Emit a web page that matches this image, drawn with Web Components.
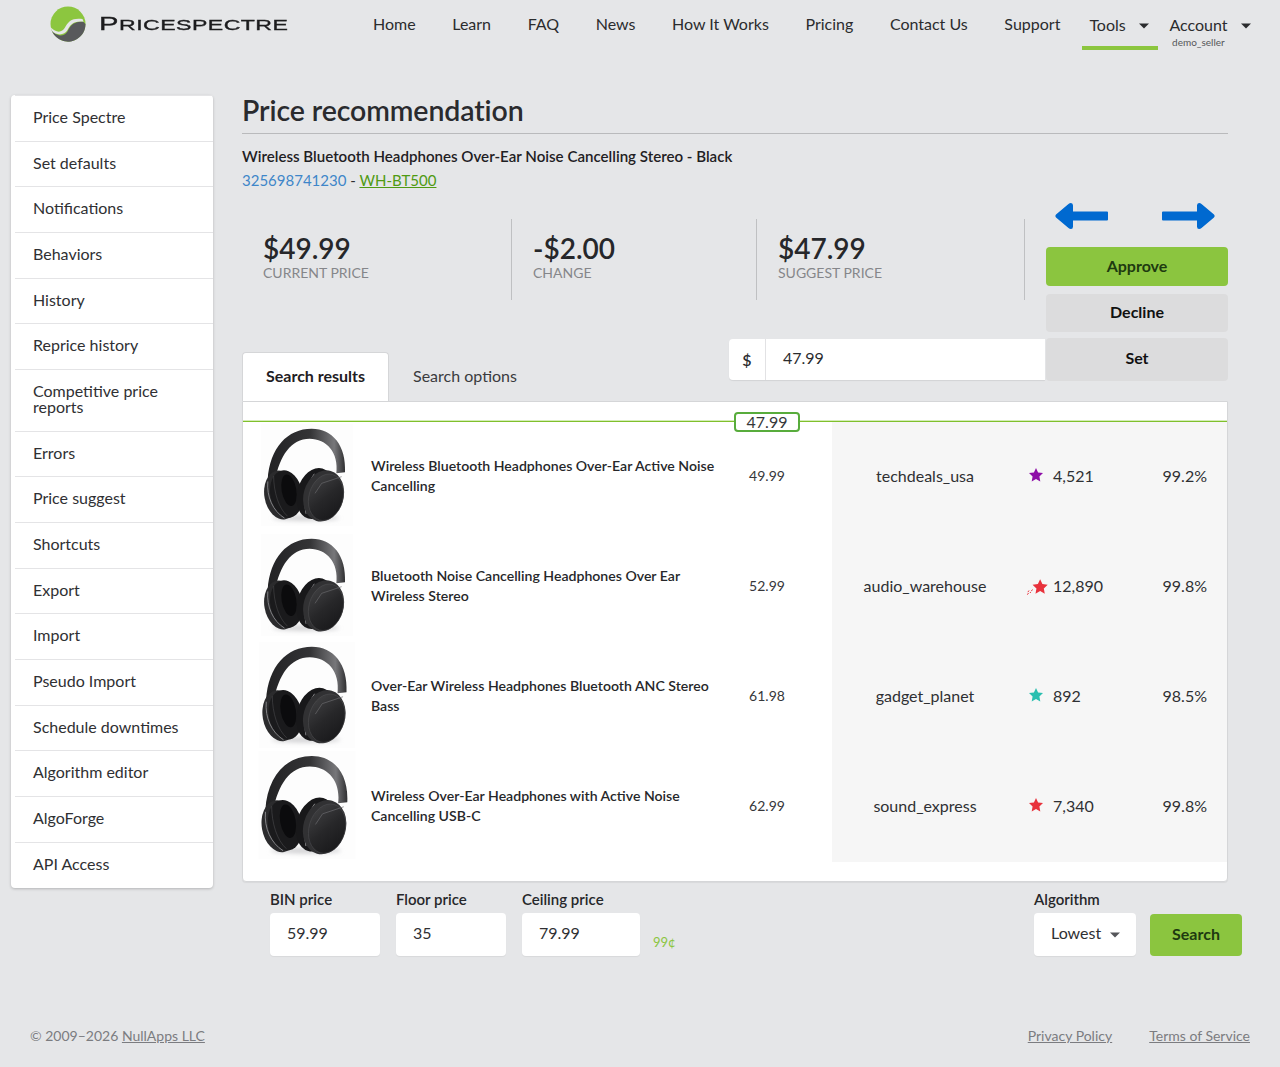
<!DOCTYPE html>
<html lang="en"><head><meta charset="utf-8"><title>Price recommendation</title>
<style>
html,body{margin:0;padding:0;background:#e5e6e8;}
body{font-family:Lato,"Liberation Sans",sans-serif;color:#2b2c2e;font-size:16px;height:1067px;overflow:hidden;}
</style></head><body>
<ps-nav></ps-nav>
<ps-layout>
  <ps-sidebar slot="side"></ps-sidebar>
  <ps-main slot="main"></ps-main>
</ps-layout>
<ps-footer></ps-footer>
<script>
function def(name,html){
  customElements.define(name,class extends HTMLElement{
    constructor(){super();const r=this.attachShadow({mode:'open'});r.innerHTML=typeof html==='function'?html(this):html;}
    connectedCallback(){ if(typeof html==='function'){this.shadowRoot.innerHTML=html(this);} }
  });
}
const caret=(c='#2b2c2e')=>`<svg width="10" height="6" viewBox="0 0 10 6"><path d="M0 .5h10L5 5.5z" fill="${c}"/></svg>`;

def('ps-logo',`<style>:host{display:flex;align-items:center;}
.t{font:400 22px "Liberation Sans",sans-serif;font-variant:small-caps;letter-spacing:.3px;color:#1c1c1e;-webkit-text-stroke:.35px #1c1c1e;transform:scaleX(1.54);transform-origin:left center;white-space:nowrap;margin-left:13px;line-height:20px;margin-top:-2px}
.t b{font-weight:400;font-size:19px}
svg{display:block}</style>
<svg width="36" height="36" viewBox="0 0 36 36">
<circle cx="18" cy="18" r="17.5" fill="#8cc63f"/>
<path d="M1.500 24C6 31 14 31 17.500 25.500C20 21 22 15.500 33 15.500L35.500 18A17.500 17.500 0 0 1 1.500 24Z" fill="#58595b"/>
<path d="M.9 21.500C6 27 12 27 15 21.500C18 15 23 11.500 32.500 13L33.600 15.700C23 14.500 20 19.500 17.500 24C14 30 6 29.500 1.600 24.500Z" fill="#e5e6e8"/>
</svg><span class="t"><b>P</b>ricespectre</span>`);

def('ps-nav',`<style>:host{display:flex;height:50px;box-sizing:border-box;padding-left:50px;align-items:flex-start;color:#2b2c2e}
ps-logo{margin-top:6px;width:323px}
nav{display:flex;gap:36.600px;font-size:16px;line-height:20px;padding-top:14px}
.menu{display:flex;margin-left:22px}
.m{position:relative;height:50px;box-sizing:border-box;padding-top:15px;line-height:20px;}
.tools{width:76px;border-bottom:4px solid #8cc63f;padding-left:7px}
.acct{width:70px;margin-left:11px}
.m svg{position:absolute;top:23px}
.tools svg{left:57px}.acct svg{left:72px}
small{display:block;font-size:10px;line-height:12px;color:#55565a;text-align:center;margin-top:1px;width:58px}
</style><ps-logo></ps-logo><nav><span>Home</span><span>Learn</span><span>FAQ</span><span>News</span><span>How It Works</span><span>Pricing</span><span>Contact Us</span><span>Support</span></nav>
<div class="menu"><div class="m tools">Tools${caret()}</div><div class="m acct">Account${caret()}<small>demo_seller</small></div></div>`);

def('ps-layout',`<style>:host{display:flex;padding:45px 0 0 11px;align-items:flex-start}
::slotted([slot=side]){width:202px;flex:none}::slotted([slot=main]){margin-left:29px;flex:none}</style><slot name="side"></slot><slot name="main"></slot>`);

const side=["Price Spectre","Set defaults","Notifications","Behaviors","History","Reprice history","Competitive price reports","Errors","Price suggest","Shortcuts","Export","Import","Pseudo Import","Schedule downtimes","Algorithm editor","AlgoForge","API Access"];
def('ps-sidebar',`<style>:host{display:block;background:#fff;border-radius:4px;box-shadow:0 1px 3px rgba(0,0,0,.22);padding:0 0 0 4px;box-sizing:border-box;height:793px}
div{box-sizing:border-box;height:45.700px;padding:13px 22px 0 18px;line-height:16px;border-top:1px solid #e4e4e6;color:#2f3033}
div:first-child{border-top:0;height:46px;padding-top:14px}
div.tall{height:61.500px;padding-top:13px;padding-right:30px}
</style>`+side.map(s=>`<div class="${s.startsWith('Competitive')?'tall':''}">${s}</div>`).join(''));

let hid=0;
const hp=(sc=1)=>{const n=hid++;return `<svg width="92" height="102" viewBox="60 250 276 306" style="transform:scale(${sc})">
<defs>
<linearGradient id="b${n}" x1="0" x2="1" y1="0" y2="0"><stop offset="0" stop-color="#222224"/><stop offset=".55" stop-color="#343436"/><stop offset=".86" stop-color="#77777a"/><stop offset="1" stop-color="#2f2f31"/></linearGradient>
<linearGradient id="c${n}" x1="0" x2="1" y1="0" y2="1"><stop offset="0" stop-color="#454547"/><stop offset=".5" stop-color="#272729"/><stop offset="1" stop-color="#151517"/></linearGradient>
<filter id="s${n}" x="-20%" y="-80%" width="140%" height="260%"><feGaussianBlur stdDeviation="6"/></filter>
</defs>
<rect x="60" y="250" width="276" height="306" fill="#fdfdfd"/>
<ellipse cx="195" cy="532" rx="100" ry="8" fill="#d2d2d4" filter="url(#s${n})"/>
<path d="M80 418C86 320 140 264 212 264C275 264 316 315 312 395L286 398C294 335 256 294 206 294C150 294 116 345 102 420Z" fill="url(#b${n})"/>
<g transform="rotate(-10 126 462)">
<ellipse cx="120" cy="462" rx="50" ry="74" fill="#2b2b2d"/>
<ellipse cx="136" cy="462" rx="48" ry="72" fill="#1a1a1c"/>
<ellipse cx="146" cy="452" rx="22" ry="48" fill="#0b0b0d"/>
<path d="M88 415C76 460 88 505 118 532" stroke="#8a8a8d" stroke-width="2.500" fill="none"/>
<path d="M108 402C100 450 106 500 128 528" stroke="#4c4c4f" stroke-width="1.500" fill="none"/>
</g>
<g transform="rotate(16 242 464)">
<ellipse cx="222" cy="464" rx="54" ry="78" fill="#18181a"/>
<path d="M203 408C190 445 192 490 212 530" stroke="#8f8f92" stroke-width="2.500" fill="none"/>
<ellipse cx="248" cy="464" rx="60" ry="78" fill="#313133"/>
<ellipse cx="256" cy="466" rx="51" ry="71" fill="url(#c${n})" stroke="#555558" stroke-width="1.200"/>
</g>
<path d="M222 458L242 428L302 408" stroke="#6a6a6d" stroke-width="2" fill="none"/>
</svg>`};

const star=(c,dash)=>`<svg width="16" height="20" viewBox="0 0 16 20" style="overflow:visible"><g ${dash?'transform="translate(3.500 1) scale(1.080)"':''}><path d="M8 3l2.100 4.500 4.900.6-3.600 3.400.9 4.900L8 13.900 3.700 16.400l.9-4.900L1 8.100l4.900-.6z" fill="${c}"/></g>${dash?`<path d="M4.500 14.500l-2.500 3.500M1 15.500l-1.500 2.200M.5 18l-1.200 1.800" stroke="${c}" stroke-width="1" stroke-dasharray="2 1"/>`:''}</svg>`;

const rows=[
["Wireless Bluetooth Headphones Over-Ear Active Noise Cancelling","49.99","techdeals_usa","#8e0ea8","4,521","99.2%",0,1],
["Bluetooth Noise Cancelling Headphones Over Ear Wireless Stereo","52.99","audio_warehouse","#e8323c","12,890","99.8%",1,1],
["Over-Ear Wireless Headphones Bluetooth ANC Stereo Bass","61.98","gadget_planet","#2abfb0","892","98.5%",0,1.04],
["Wireless Over-Ear Headphones with Active Noise Cancelling USB-C","62.99","sound_express","#e8323c","7,340","99.8%",0,1.06]];

def('ps-row',el=>{const r=rows[+el.getAttribute('i')];return `<style>:host{display:grid;grid-template-columns:128px 353px 108px 186px 1fr 90px;height:110px;align-items:center}
.i{display:flex;justify-content:center;padding-bottom:5px;}
.t{font-size:14.100px;font-weight:600;line-height:20px;color:#26272a;padding-bottom:2px}
.p{font-size:14px;text-align:center;color:#36373a;padding:0 22px 4px 0}
.g{background:#f6f6f6;height:100%;box-sizing:border-box;display:flex;align-items:center;justify-content:center;color:#2f3033;padding-bottom:4px}
.f{justify-content:flex-start;padding-left:10px;gap:9px}
.q{justify-content:flex-end;padding-right:20px}
svg{display:block}</style>
<div class="i">${hp(r[7])}</div><div class="t">${r[0]}</div><div class="p">${r[1]}</div><div class="g">${r[2]}</div><div class="g f">${star(r[3],r[6])}<span>${r[4]}</span></div><div class="g q">${r[5]}</div>`});

def('ps-main',`<style>:host{display:block;width:1000px;color:#2b2c2e}
.w{width:986px}
h1{margin:0;font-size:28.500px;line-height:30px;font-weight:600;letter-spacing:-.1px;padding-bottom:8px;border-bottom:1px solid #b9babc;height:30px;color:#2a2b2e}
.pt{font-size:15.100px;font-weight:600;line-height:20px;margin-top:12px;color:#1f2023}
.ln{font-size:15px;line-height:20px;margin-top:4px;color:#2f3033}
.ln a{color:#3f86c9}.ln a+a{color:#4f9a12;text-decoration:underline}
.top{display:flex;justify-content:space-between;height:150px}
.stats{display:flex;margin-top:29px;height:81px}
.st{box-sizing:border-box;border-right:1px solid #bfc0c2;padding:13px 0 0 21px}
.st b{display:block;font-size:28px;line-height:32px;font-weight:600;color:#26272a}
.st span{display:block;font-size:14px;line-height:18px;color:#85868a;text-transform:uppercase;margin-top:0}
.act{width:182px;display:flex;flex-direction:column;margin-top:2px}
.ar{display:flex;justify-content:space-between;padding:10px 12px 0 8px;height:28px;margin-bottom:17px}
.btn{box-sizing:border-box;border-radius:4px;display:flex;align-items:center;justify-content:center;font-weight:700;color:#111;background:#dcdcdd;font-size:16px;padding-bottom:3px}
.gr{background:#8bc53f;color:#1e3a10;font-weight:700}
.tr{display:flex;height:63px;justify-content:space-between;align-items:flex-start;margin-top:-2px}
.tabs{display:flex;align-self:flex-end}
.tab{height:49px;box-sizing:border-box;padding:14px 24px 0;line-height:20px;border-radius:4px 4px 0 0}
.tab.a{background:#fff;font-weight:700;padding:13px 0 0 23px;width:147px;border:1px solid #d5d6d8;border-bottom:0;color:#1f2023;font-size:16px}
.tab.o{color:#3a3b3e;padding-top:14px}
.ig{display:flex;align-items:flex-start}
.in{display:flex;background:#fff;width:316px;height:41px;border-radius:4px 0 0 4px;box-shadow:0 1px 1px rgba(0,0,0,.08);margin:1px 1px 0 0}
.in i{font-style:normal;width:36px;border-right:1px solid #e2e2e4;display:flex;align-items:center;justify-content:center;font-weight:600}
.in span{padding:9px 0 0 17px;line-height:20px}
.panel{background:#fff;border:1px solid #d5d6d8;border-radius:0 0 4px 4px;box-shadow:0 1px 1px rgba(0,0,0,.06);height:481px;box-sizing:border-box;position:relative;padding-top:18px}
.gl{height:0;border-top:1px solid #d5ecb8;border-bottom:1px solid #80c02c}
.badge{position:absolute;z-index:2;left:491px;top:10px;width:66px;height:20px;box-sizing:border-box;border:2px solid #58ac3c;border-radius:4px;background:#fff;text-align:center;line-height:16px;font-size:16px;color:#36373a}
.form{display:flex;padding-left:28px;margin-top:7px;width:1000px;box-sizing:border-box;align-items:flex-start}
.fd label{display:block;font-size:15px;line-height:20px;font-weight:600;color:#26272a}
.box{background:#fff;border-radius:4px;height:43px;box-sizing:border-box;padding:10px 0 0 17px;line-height:20px;margin-top:4px;color:#2f3033;box-shadow:0 1px 1px rgba(0,0,0,.06)}
.c{font-size:13px;color:#8bc53f;margin:45px 0 0 13px;line-height:16px;}
.al{margin-left:auto;margin-right:14px}
.sel{width:102px;display:flex;gap:9px;align-items:flex-start}
.sel svg{margin-top:9px}
.se{width:92px;height:42px;margin-top:25px}
</style>
<div class="w">
<h1>Price recommendation</h1>
<div class="pt">Wireless Bluetooth Headphones Over-Ear Noise Cancelling Stereo - Black</div>
<div class="ln"><a>325698741230</a> - <a>WH-BT500</a></div>
<div class="top">
 <div class="stats">
  <div class="st" style="width:270px"><b>$49.99</b><span>Current price</span></div>
  <div class="st" style="width:245px"><b>-$2.00</b><span>Change</span></div>
  <div class="st" style="width:268px"><b>$47.99</b><span>Suggest price</span></div>
 </div>
 <div class="act">
  <div class="ar">
   <svg width="54" height="28" viewBox="0 0 54 28"><path d="M53 9.500H19V3.500Q19 1 17 1Q15.500 1 14.500 2L2 12.500Q.5 14 2 15.500L14.500 26Q15.500 27 17 27Q19 27 19 24.500V18.500H53Q54 18.500 54 17.500V10.500Q54 9.500 53 9.500Z" fill="#0069d0"/></svg>
   <svg width="54" height="28" viewBox="0 0 54 28"><path d="M1 9.500H35V3.500Q35 1 37 1Q38.500 1 39.500 2L52 12.500Q53.500 14 52 15.500L39.500 26Q38.500 27 37 27Q35 27 35 24.500V18.500H1Q0 18.500 0 17.500V10.500Q0 9.500 1 9.500Z" fill="#0069d0"/></svg>
  </div>
  <div class="btn gr" style="height:39px;margin-bottom:8px">Approve</div>
  <div class="btn" style="height:38px">Decline</div>
 </div>
</div>
<div class="tr">
 <div class="tabs"><div class="tab a">Search results</div><div class="tab o">Search options</div></div>
 <div class="ig"><div class="in"><i>$</i><span>47.99</span></div><div class="btn" style="width:182px;height:43px;padding-bottom:5px">Set</div></div>
</div>
<div class="panel"><div class="gl"></div><div class="badge">47.99</div>
<ps-row i="0"></ps-row><ps-row i="1"></ps-row><ps-row i="2"></ps-row><ps-row i="3"></ps-row></div>
</div>
<div class="form">
 <div class="fd" style="width:110px"><label>BIN price</label><div class="box">59.99</div></div>
 <div class="fd" style="width:110px;margin-left:16px"><label>Floor price</label><div class="box">35</div></div>
 <div class="fd" style="width:118px;margin-left:16px"><label>Ceiling price</label><div class="box">79.99</div></div>
 <div class="c">99¢</div>
 <div class="fd al"><label>Algorithm</label><div class="box sel">Lowest${caret('#55565a')}</div></div>
 <div class="btn gr se">Search</div>
</div>`);

def('ps-footer',`<style>:host{display:flex;justify-content:space-between;position:absolute;left:30px;right:30px;top:1027px;font-size:14px;line-height:18px;color:#7b7c80}
a{color:#7b7c80;text-decoration:underline}.r{display:flex;gap:37px}</style>
<div>© 2009–2026 <a>NullApps LLC</a></div><div class="r"><a>Privacy Policy</a><a>Terms of Service</a></div>`);
</script>
</body></html>
